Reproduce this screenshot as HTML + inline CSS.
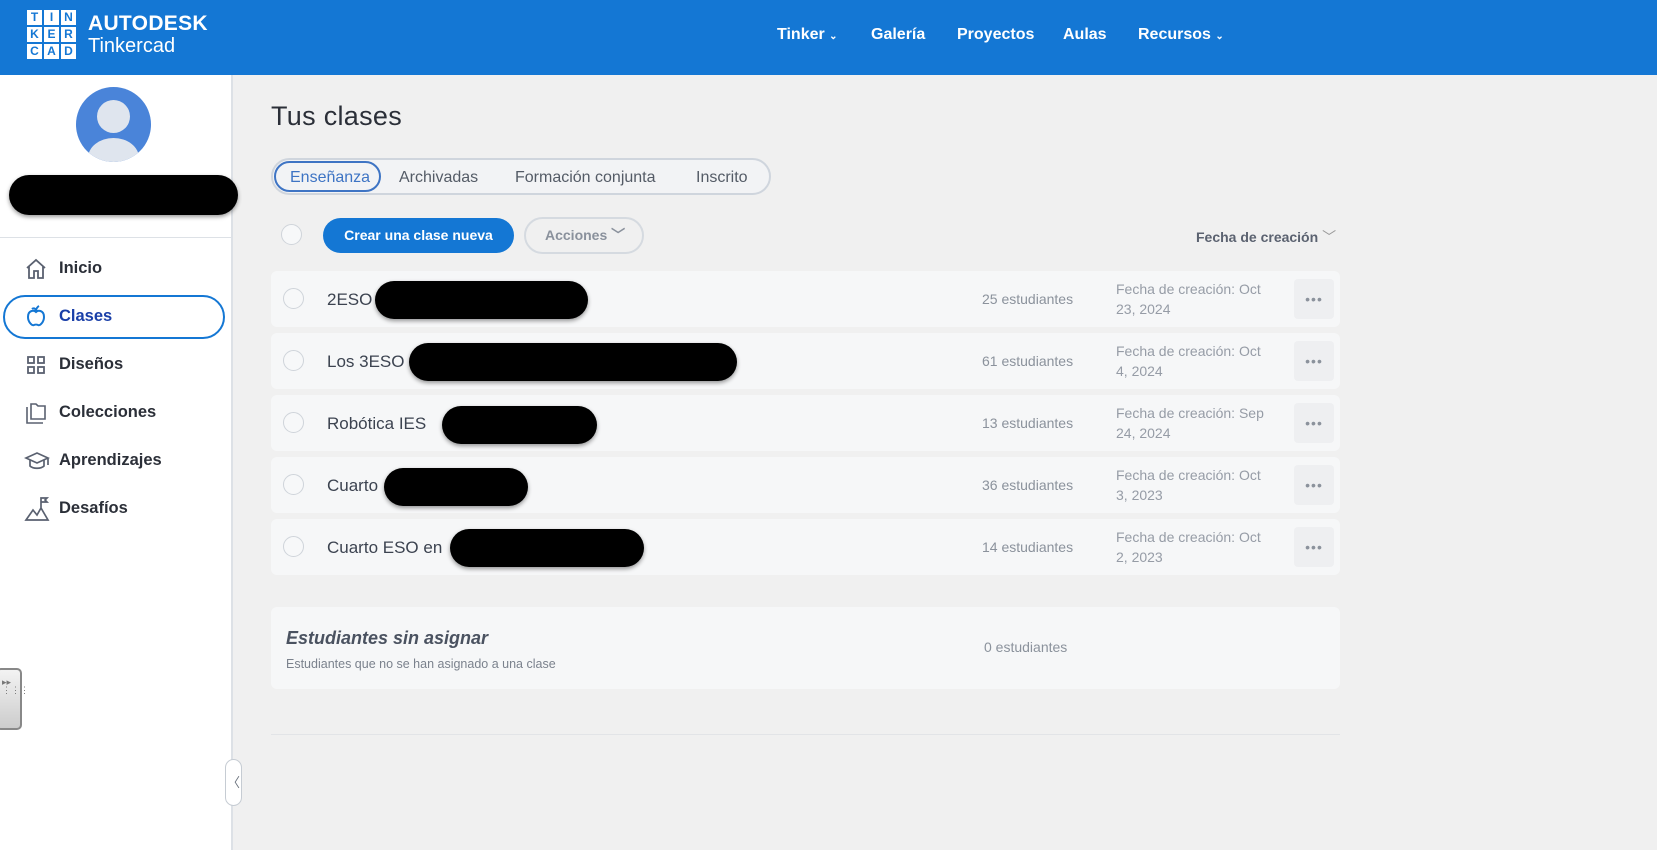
<!DOCTYPE html>
<html><head><meta charset="utf-8"><style>
*{box-sizing:border-box;margin:0;padding:0}
body{width:1657px;height:850px;overflow:hidden;background:#f0f0f0;font-family:"Liberation Sans",sans-serif;position:relative;color:#3c4350}
.hdr{position:absolute;left:0;top:0;width:1657px;height:75px;background:#1477d4}
.logo{position:absolute;left:27px;top:10px;width:49px;height:49px;display:grid;grid-template-columns:repeat(3,15px);gap:2px}
.logo span{background:#fff;color:#1477d4;font-weight:bold;font-size:12px;text-align:center;line-height:15px}
.brand{position:absolute;left:88px;top:13px;color:#fff;line-height:22px}
.brand b{font-size:21px;letter-spacing:.3px;display:block}
.brand i{font-style:normal;font-size:20px}
.nav{position:absolute;top:26px;color:#fff;font-weight:bold;font-size:16px}
.side{position:absolute;left:0;top:75px;width:233px;height:775px;background:#fff;border-right:2px solid #dde1e6}
.av{position:absolute;left:76px;top:87px;width:75px;height:75px;border-radius:50%;background:#4a84d9;overflow:hidden}
.av:before{content:"";position:absolute;left:21px;top:13px;width:33px;height:33px;border-radius:50%;background:#dfe5ee}
.av:after{content:"";position:absolute;left:12px;top:51px;width:51px;height:40px;border-radius:50%;background:#dfe5ee}
.blob{position:absolute;background:#000;border-radius:30px;box-shadow:0 2px 4px rgba(0,0,0,.4)}
.div{position:absolute;left:0;top:237px;width:233px;height:1px;background:#dde1e6}
.ni{position:absolute;left:59px;font-size:16.5px;font-weight:bold;color:#2b2f38}
.ic{position:absolute;left:24px}
.pill{position:absolute;left:3px;top:295px;width:222px;height:44px;border:2px solid #1477d4;border-radius:22px}
h1{position:absolute;left:271px;top:101px;font-weight:normal;font-size:27px;color:#2b2f38;letter-spacing:.3px}
.tabs{position:absolute;left:271px;top:158px;width:500px;height:37px;border:2px solid #cfd5dd;border-radius:19px;background:#f2f3f5}
.tab{position:absolute;top:9px;font-size:16px;color:#545b66}
.tsel{position:absolute;left:1px;top:1px;width:107px;height:31px;border:2px solid #3e74c4;border-radius:16px}
.cb{position:absolute;width:21px;height:21px;border-radius:50%;border:1px solid #cfd4da;background:#f7f8f9}
.btn{position:absolute;left:323px;top:218px;width:191px;height:35px;border-radius:18px;background:#1477d4;color:#fff;font-weight:bold;font-size:14px;text-align:center;line-height:35px}
.acc{position:absolute;left:524px;top:217px;width:120px;height:37px;border-radius:19px;border:2px solid #d5dae0;color:#8a919c;font-weight:bold;font-size:14px;line-height:33px;padding-left:19px}
.row{position:absolute;left:271px;width:1069px;height:56px;background:#f6f7f8;border-radius:6px}
.row .nm{position:absolute;left:56px;top:19px;font-size:17px;color:#3c4350}
.row .st{position:absolute;left:711px;top:20px;font-size:14px;color:#8b929c}
.row .dt{position:absolute;left:845px;top:8px;font-size:14px;color:#969ca6;line-height:20px;width:155px}
.row .dots{position:absolute;left:1023px;top:8px;width:40px;height:40px;background:#eeeff1;border-radius:4px;color:#8b929c;text-align:center;line-height:40px;font-size:14px;letter-spacing:1px}
.row .cb{left:12px;top:17px}
</style></head><body>
<div class="hdr">
<div class="logo"><span>T</span><span>I</span><span>N</span><span>K</span><span>E</span><span>R</span><span>C</span><span>A</span><span>D</span></div>
<div class="brand"><b>AUTODESK</b><i>Tinkercad</i></div>
<div class="nav" style="left:777px">Tinker <small style="font-size:10px">&#8964;</small></div>
<div class="nav" style="left:871px">Galería</div>
<div class="nav" style="left:957px">Proyectos</div>
<div class="nav" style="left:1063px">Aulas</div>
<div class="nav" style="left:1138px">Recursos <small style="font-size:10px">&#8964;</small></div>
</div>
<div class="side"></div>
<div class="av"></div>
<div class="blob" style="left:9px;top:175px;width:229px;height:40px"></div>
<div class="div"></div>
<div class="pill"></div>
<svg class="ic" style="top:257px" width="24" height="24" viewBox="0 0 24 24" fill="none" stroke="#5a6170" stroke-width="1.8"><path d="M3 11L12 3l9 8M5 9v12h5v-7h4v7h5V9"/></svg>
<div class="ni" style="top:259px">Inicio</div>
<svg class="ic" style="top:304px" width="24" height="24" viewBox="0 0 24 24" fill="none" stroke="#1477d4" stroke-width="2"><path d="M12 8c-2-2-8-2-8 5 0 5 4 9 6 8 1-.5 3-.5 4 0 2 1 6-3 6-8 0-7-6-7-8-5zM12 8c0-3 1-5 3-6M12 6c-1-2-3-2-4-1"/></svg>
<div class="ni" style="top:307px;color:#1a3fa8">Clases</div>
<svg class="ic" style="top:353px" width="24" height="24" viewBox="0 0 24 24" fill="none" stroke="#5a6170" stroke-width="1.8"><rect x="4" y="4" width="6" height="6"/><rect x="14" y="4" width="6" height="6"/><rect x="4" y="14" width="6" height="6"/><rect x="14" y="14" width="6" height="6"/></svg>
<div class="ni" style="top:355px">Diseños</div>
<svg class="ic" style="top:401px" width="24" height="24" viewBox="0 0 24 24" fill="none" stroke="#5a6170" stroke-width="1.6"><path d="M3 6v16h16M7 3h5l2 2h7v13H7z"/></svg>
<div class="ni" style="top:403px">Colecciones</div>
<svg class="ic" style="top:449px" width="26" height="24" viewBox="0 0 26 24" fill="none" stroke="#5a6170" stroke-width="1.7"><path d="M2 9l11-5 11 5-11 5zM6 11v6c3 3 11 3 14 0v-6M24 9v7"/></svg>
<div class="ni" style="top:451px">Aprendizajes</div>
<svg class="ic" style="top:496px" width="26" height="26" viewBox="0 0 26 26" fill="none" stroke="#5a6170" stroke-width="1.7"><path d="M2 24l7-10 4 5 4-7 7 12zM17 12V2h6l-2 2 2 2h-6"/></svg>
<div class="ni" style="top:499px">Desafíos</div>
<div style="position:absolute;left:-4px;top:668px;width:26px;height:62px;border:2px solid #888;border-radius:5px;background:linear-gradient(#f3f3f3,#ccc);color:#777;font-size:9px;padding:8px 0 0 4px;line-height:8px">▸▸<br>⋮⋮⋮</div>
<div style="position:absolute;left:225px;top:759px;width:17px;height:47px;border:1px solid #c6ccd3;border-radius:9px;background:#fff;color:#6b727d;font-size:13px;text-align:center;line-height:45px">〈</div>

<h1>Tus clases</h1>
<div class="tabs"><div class="tsel"></div>
<div class="tab" style="left:17px;color:#3e74c4">Enseñanza</div>
<div class="tab" style="left:126px">Archivadas</div>
<div class="tab" style="left:242px">Formación conjunta</div>
<div class="tab" style="left:423px">Inscrito</div></div>
<div class="cb" style="left:281px;top:224px"></div>
<div class="btn">Crear una clase nueva</div>
<div class="acc">Acciones ﹀</div>
<div style="position:absolute;left:1196px;top:227px;font-size:14px;font-weight:bold;color:#5b6270">Fecha de creación <span style="font-weight:normal;color:#999">﹀</span></div>

<div class="row" style="top:271px"><div class="cb"></div><div class="nm">2ESO</div><div class="st">25 estudiantes</div><div class="dt">Fecha de creación: Oct 23, 2024</div><div class="dots">•••</div></div>
<div class="row" style="top:333px"><div class="cb"></div><div class="nm">Los 3ESO</div><div class="st">61 estudiantes</div><div class="dt">Fecha de creación: Oct 4, 2024</div><div class="dots">•••</div></div>
<div class="row" style="top:395px"><div class="cb"></div><div class="nm">Robótica IES</div><div class="st">13 estudiantes</div><div class="dt">Fecha de creación: Sep 24, 2024</div><div class="dots">•••</div></div>
<div class="row" style="top:457px"><div class="cb"></div><div class="nm">Cuarto</div><div class="st">36 estudiantes</div><div class="dt">Fecha de creación: Oct 3, 2023</div><div class="dots">•••</div></div>
<div class="row" style="top:519px"><div class="cb"></div><div class="nm">Cuarto ESO en</div><div class="st">14 estudiantes</div><div class="dt">Fecha de creación: Oct 2, 2023</div><div class="dots">•••</div></div>

<div class="blob" style="left:375px;top:281px;width:213px;height:38px"></div>
<div class="blob" style="left:409px;top:343px;width:328px;height:38px"></div>
<div class="blob" style="left:442px;top:406px;width:155px;height:38px"></div>
<div class="blob" style="left:384px;top:468px;width:144px;height:38px"></div>
<div class="blob" style="left:450px;top:529px;width:194px;height:38px"></div>

<div style="position:absolute;left:271px;top:607px;width:1069px;height:82px;background:#f6f7f8;border-radius:6px">
<div style="position:absolute;left:15px;top:21px;font-size:18px;font-style:italic;font-weight:bold;color:#4a5260">Estudiantes sin asignar</div>
<div style="position:absolute;left:15px;top:50px;font-size:12.5px;color:#7b828d">Estudiantes que no se han asignado a una clase</div>
<div style="position:absolute;left:713px;top:32px;font-size:14px;color:#8b929c">0 estudiantes</div></div>
<div style="position:absolute;left:271px;top:734px;width:1069px;height:1px;background:#e2e4e7"></div>
</body></html>
